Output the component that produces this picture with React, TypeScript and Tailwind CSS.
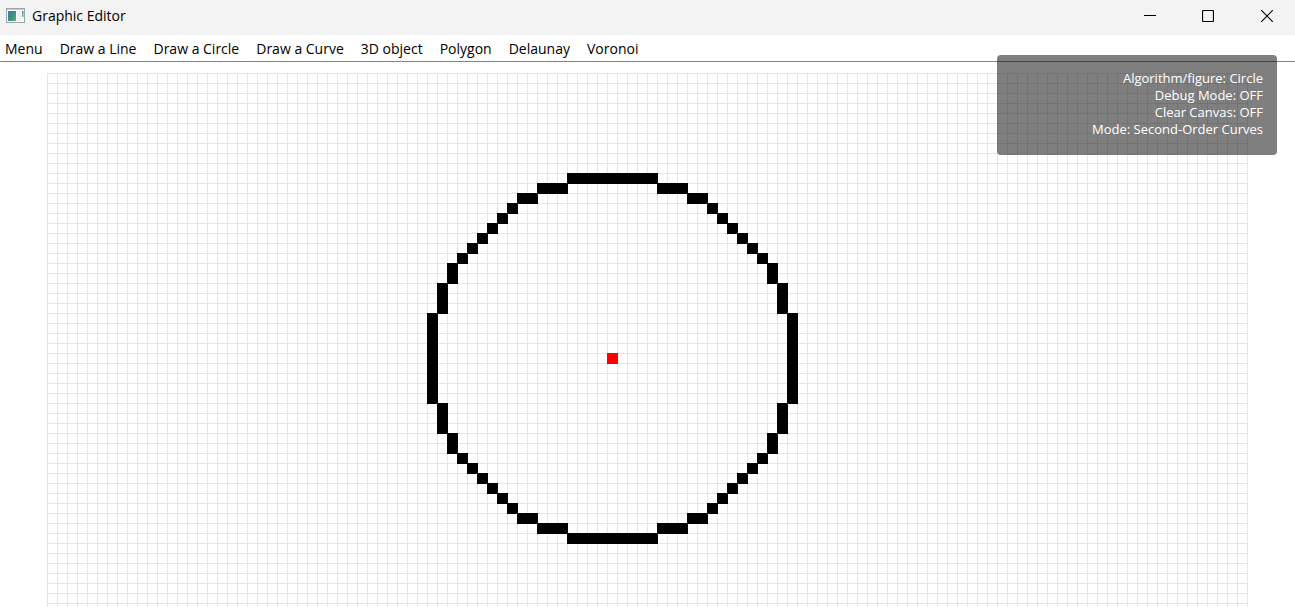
const CELL = 10;
const COLUMNS = 120;
const ROWS = 120;
const CENTER = { x: 56, y: 28 };
const RADIUS = 18;

const MENU_ITEMS = [
  "Menu",
  "Draw a Line",
  "Draw a Circle",
  "Draw a Curve",
  "3D object",
  "Polygon",
  "Delaunay",
  "Voronoi",
];

const STATUS_LINES = [
  "Algorithm/figure: Circle",
  "Debug Mode: OFF",
  "Clear Canvas: OFF",
  "Mode: Second-Order Curves",
];

type Point = { x: number; y: number };

// Second octant of the circle, mirrored into the other seven.
function circlePoints(center: Point, radius: number): Point[] {
  const points = new Map<string, Point>();
  for (let dx = 0; dx <= radius; dx++) {
    const dy = Math.round(Math.sqrt(radius * radius - dx * dx));
    if (dy < dx) break;
    for (const [a, b] of [[dx, dy], [dy, dx]]) {
      for (const sx of [-1, 1]) {
        for (const sy of [-1, 1]) {
          const point = { x: center.x + a * sx, y: center.y + b * sy };
          points.set(`${point.x},${point.y}`, point);
        }
      }
    }
  }
  return [...points.values()];
}

function Cell({ x, y, color }: Point & { color: string }) {
  return <rect x={x * CELL} y={y * CELL} width={CELL + 1} height={CELL + 1} fill={color} />;
}

function Canvas() {
  const width = COLUMNS * CELL + 1;
  const height = ROWS * CELL + 1;
  return (
    <svg width={width} height={height} shapeRendering="crispEdges" className="block shrink-0" role="img" aria-label="Drawing canvas">
      <defs>
        <pattern id="grid" width={CELL} height={CELL} patternUnits="userSpaceOnUse">
          <path d={`M0 0H${CELL}V1H1V${CELL}H0Z`} fill="#e6e6e6" />
        </pattern>
      </defs>
      <rect width={width} height={height} fill="url(#grid)" />
      {circlePoints(CENTER, RADIUS).map((p) => (
        <Cell key={`${p.x},${p.y}`} x={p.x} y={p.y} color="#000000" />
      ))}
      <Cell x={CENTER.x} y={CENTER.y} color="#ff0000" />
    </svg>
  );
}

function AppIcon() {
  return (
    <svg width="20" height="16" viewBox="0 0 20 16" aria-hidden="true">
      <defs>
        <linearGradient id="pane" x1="0" y1="0" x2="1" y2="1">
          <stop offset="0" stopColor="#4677a6" />
          <stop offset="0.5" stopColor="#3c8f85" />
          <stop offset="1" stopColor="#5cb774" />
        </linearGradient>
        <linearGradient id="strip" x1="0" y1="0" x2="0" y2="1">
          <stop offset="0" stopColor="#4f80b5" />
          <stop offset="1" stopColor="#69bd80" />
        </linearGradient>
      </defs>
      <rect x="0.5" y="0.5" width="18" height="14" fill="#f8f9fa" stroke="#9ba3ab" />
      <rect x="1" y="1" width="17" height="1" fill="#c9ced3" />
      <rect x="2" y="3" width="8" height="10" fill="url(#pane)" />
      <rect x="11" y="3" width="4" height="10" fill="#eff1f2" />
      <rect x="16" y="3" width="1.5" height="6" fill="url(#strip)" />
    </svg>
  );
}

function TitleBar() {
  const button = "flex w-[58px] items-center justify-center self-stretch";
  return (
    <header className="flex h-[35px] shrink-0 items-center bg-[#f3f3f3] pb-[3px] pl-1.5">
      <AppIcon />
      <h1 className="ml-1.5 text-sm">Graphic Editor</h1>
      <div className="ml-auto flex self-stretch">
        <button type="button" aria-label="Minimize" className={button}>
          <svg width="12" height="12" viewBox="0 0 12 12" shapeRendering="crispEdges">
            <path d="M0 5.5H12" stroke="#000" />
          </svg>
        </button>
        <button type="button" aria-label="Maximize" className={button}>
          <svg width="12" height="12" viewBox="0 0 12 12" fill="none">
            <rect x="0.5" y="0.5" width="11" height="11" rx="1" stroke="#000" strokeWidth="1.2" />
          </svg>
        </button>
        <button type="button" aria-label="Close" className={button}>
          <svg width="14" height="12" viewBox="0 0 14 12" fill="none">
            <path d="M2.2 0.2L13.8 11.8M13.8 0.2L2.2 11.8" stroke="#000" strokeWidth="1.2" />
          </svg>
        </button>
      </div>
    </header>
  );
}

function MenuBar() {
  return (
    <nav className="flex h-[27px] shrink-0 items-center gap-[17px] border-b border-[#83838d] px-[5px] pt-0.5">
      {MENU_ITEMS.map((item) => (
        <button key={item} type="button" className="whitespace-nowrap">
          {item}
        </button>
      ))}
    </nav>
  );
}

function StatusOverlay() {
  return (
    <aside className="absolute top-[55px] right-[18px] w-[280px] rounded bg-black/50 px-3.5 pt-[15px] pb-[17px] text-right text-[13px] leading-[17px] text-white">
      {STATUS_LINES.map((line) => (
        <p key={line}>{line}</p>
      ))}
    </aside>
  );
}

export default function App() {
  return (
    <div className="relative flex h-screen flex-col overflow-hidden bg-white font-['Open_Sans','Noto_Sans',sans-serif] text-sm text-black">
      <TitleBar />
      <MenuBar />
      <main className="flex min-h-0 flex-1 items-start justify-center overflow-hidden pt-[11px]">
        <Canvas />
      </main>
      <StatusOverlay />
    </div>
  );
}
